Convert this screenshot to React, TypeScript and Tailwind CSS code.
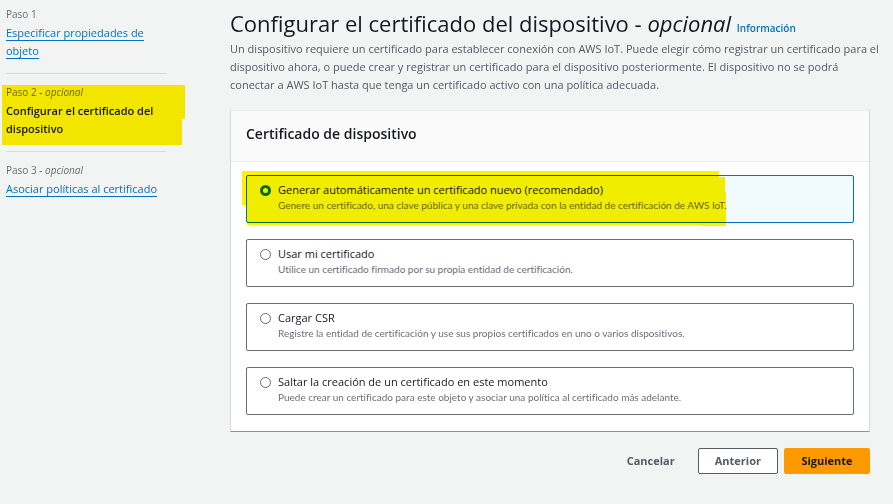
import { useState } from "react";

const steps = [
  { label: "Paso 1", optional: false, title: "Especificar propiedades de objeto" },
  { label: "Paso 2", optional: true, title: "Configurar el certificado del dispositivo" },
  { label: "Paso 3", optional: true, title: "Asociar políticas al certificado" },
];

const options = [
  {
    id: "auto",
    title: "Generar automáticamente un certificado nuevo (recomendado)",
    text: "Genere un certificado, una clave pública y una clave privada con la entidad de certificación de AWS IoT.",
  },
  {
    id: "own",
    title: "Usar mi certificado",
    text: "Utilice un certificado firmado por su propia entidad de certificación.",
  },
  {
    id: "csr",
    title: "Cargar CSR",
    text: "Registre la entidad de certificación y use sus propios certificados en uno o varios dispositivos.",
  },
  {
    id: "skip",
    title: "Saltar la creación de un certificado en este momento",
    text: "Puede crear un certificado para este objeto y asociar una política al certificado más adelante.",
  },
];

function StepMarker() {
  return (
    <svg
      className="pointer-events-none absolute top-0 -left-1 mix-blend-multiply"
      width="184"
      height="60"
      aria-hidden="true"
    >
      <path d="M0 0H183V34H180V60H0Z" fill="#fff200" />
    </svg>
  );
}

function OptionMarker() {
  return (
    <svg
      className="pointer-events-none absolute -top-[5px] -left-[5px] mix-blend-multiply"
      width="484"
      height="55"
      aria-hidden="true"
    >
      <path d="M0 0H477V6H483V21H484V55H458V54H5V34H0Z" fill="#fff200" />
    </svg>
  );
}

function Steps({ current }: { current: number }) {
  return (
    <nav className="w-40 shrink-0 pt-1.5">
      <ol>
        {steps.map((step, i) => (
          <li
            key={step.label}
            className="relative border-b border-[#d5dbdb] pt-2.5 pb-[13px] first:pt-0 last:border-b-0"
          >
            <div className="mb-0.5 text-[10px] leading-4 text-[#687078]">
              {step.label}
              {step.optional && <i> - opcional</i>}
            </div>
            <div className="text-[11px] leading-[18px]">
              {i === current ? (
                <strong className="font-semibold text-[#16191f]">{step.title}</strong>
              ) : (
                <a href="#" className="border-b border-[#0073bb] text-[#0073bb]">
                  {step.title}
                </a>
              )}
            </div>
            {i === current && (
              <div className="absolute top-[11px] left-0">
                <StepMarker />
              </div>
            )}
          </li>
        ))}
      </ol>
    </nav>
  );
}

export default function App() {
  const [choice, setChoice] = useState("auto");

  return (
    <div className="flex min-h-screen gap-16 bg-[#f2f3f3] pr-[23px] pl-1.5 font-['Open_Sans',sans-serif] text-[#16191f]">
      <Steps current={1} />
      <main className="min-w-0 flex-1 pt-2">
        <header>
          <h1 className="mb-0.5 text-[22px] leading-[30px]">
            Configurar el certificado del dispositivo - <i>opcional</i>{" "}
            <a href="#" className="text-[10px] leading-none font-semibold text-[#0073bb]">
              Información
            </a>
          </h1>
          <p className="-mr-3 text-[11px] leading-[18px] text-[#545b64]">
            Un dispositivo requiere un certificado para establecer conexión con AWS IoT. Puede elegir cómo registrar un
            certificado para el dispositivo ahora, o puede crear y registrar un certificado para el dispositivo
            posteriormente. El dispositivo no se podrá conectar a AWS IoT hasta que tenga un certificado activo con una
            política adecuada.
          </p>
        </header>

        <section className="mt-4 border border-t-[#eaeded] border-r-[#d5dbdb] border-b-[#879596] border-l-[#d5dbdb] bg-white">
          <h2 className="border-b border-[#eaeded] bg-[#fafafa] px-[15px] pt-3 pb-4 text-[14px] leading-[22px] font-semibold">
            Certificado de dispositivo
          </h2>
          <div
            role="radiogroup"
            aria-label="Certificado de dispositivo"
            className="flex flex-col gap-4 px-[15px] pt-[13px] pb-4"
          >
            {options.map((o) => (
              <label
                key={o.id}
                className="relative flex items-start gap-[7px] rounded-xs border border-[#687078] bg-white px-[13px] pt-1.5 pb-[9px] has-checked:border-[#0073bb] has-checked:bg-[#f1faff]"
              >
                <input
                  type="radio"
                  name="certificate"
                  value={o.id}
                  checked={choice === o.id}
                  onChange={() => setChoice(o.id)}
                  className="mt-[3px] size-[11px] shrink-0 appearance-none rounded-full border border-[#687078] bg-white checked:border-3 checked:border-[#0073bb]"
                />
                <span className="flex flex-col">
                  <span className="text-[11px] leading-4">{o.title}</span>
                  <span className="font-[Lato,sans-serif] text-[10px] leading-[15px] text-[#687078] [font-variant-ligatures:none]">
                    {o.text}
                  </span>
                </span>
                {o.id === "auto" && <OptionMarker />}
              </label>
            ))}
          </div>
        </section>

        <div className="mt-4 flex justify-end gap-1.5 text-[11px] leading-[18px] font-bold text-[#545b64]">
          <button type="button" className="border border-transparent px-4 py-[3px]">
            Cancelar
          </button>
          <button type="button" className="min-w-20 rounded-xs border border-[#545b64] bg-white px-4 py-[3px]">
            Anterior
          </button>
          <button
            type="button"
            className="min-w-[86px] rounded-xs border border-[#ff9900] bg-[#ff9900] px-4 py-[3px] text-[#16191f]"
          >
            Siguiente
          </button>
        </div>
      </main>
    </div>
  );
}
